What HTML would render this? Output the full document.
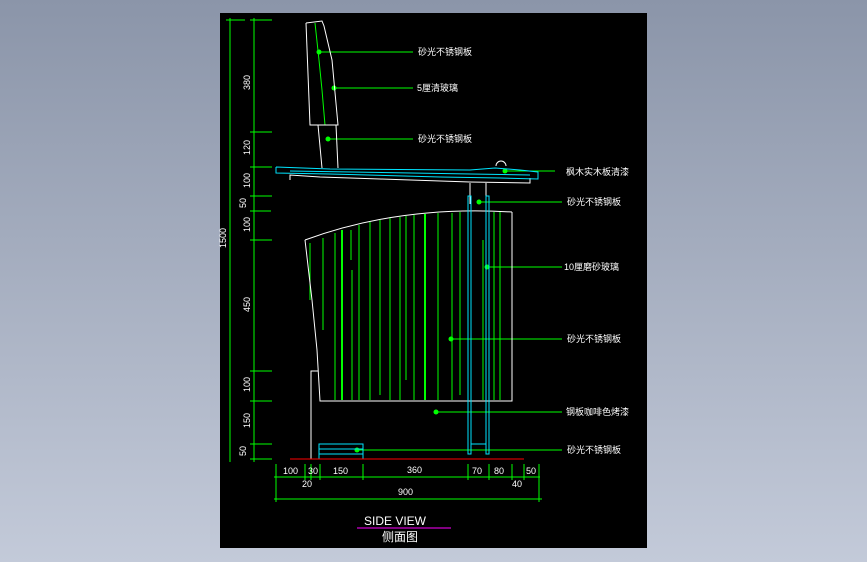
<!DOCTYPE html>
<html><head><meta charset="utf-8"><style>
html,body{margin:0;padding:0;width:867px;height:562px;overflow:hidden;background:linear-gradient(#8b95a9,#c3cad9);}
svg{position:absolute;left:0;top:0}
text{font-family:"Liberation Sans","Noto Sans CJK SC",sans-serif;fill:#fff}
</style></head><body>
<svg width="867" height="562" viewBox="0 0 867 562">
<rect x="220" y="13" width="427" height="535" fill="#000"/>
<g stroke="#00ff00" stroke-width="1" fill="none">
<line x1="230" y1="18" x2="230" y2="462"/>
<line x1="254" y1="18" x2="254" y2="462"/>
<line x1="226" y1="20" x2="245" y2="20"/>
<line x1="250" y1="20" x2="272" y2="20"/>
<line x1="250" y1="132" x2="272" y2="132"/>
<line x1="250" y1="167" x2="272" y2="167"/>
<line x1="250" y1="196" x2="272" y2="196"/>
<line x1="250" y1="211" x2="271" y2="211"/>
<line x1="250" y1="240" x2="272" y2="240"/>
<line x1="250" y1="371" x2="272" y2="371"/>
<line x1="250" y1="401" x2="272" y2="401"/>
<line x1="250" y1="444" x2="272" y2="444"/>
<line x1="250" y1="459" x2="272" y2="459"/>
<!-- bottom dims -->
<line x1="274" y1="477" x2="540" y2="477"/>
<line x1="274" y1="499" x2="542" y2="499"/>
<g>
<line x1="276" y1="464" x2="276" y2="502"/><line x1="305" y1="464" x2="305" y2="480"/>
<line x1="311" y1="464" x2="311" y2="480"/><line x1="320" y1="464" x2="320" y2="480"/>
<line x1="363" y1="464" x2="363" y2="480"/><line x1="468" y1="464" x2="468" y2="480"/>
<line x1="489" y1="464" x2="489" y2="480"/><line x1="512" y1="464" x2="512" y2="480"/>
<line x1="524" y1="464" x2="524" y2="480"/><line x1="539" y1="464" x2="539" y2="502"/>
</g>
<!-- backrest green -->
<polyline points="315,23 319,60 322,90 325,125"/>
<!-- stripes -->
<line x1="310" y1="243" x2="310" y2="300"/>
<line x1="323" y1="238" x2="323" y2="330"/>
<line x1="335" y1="233" x2="335" y2="400"/>
<line x1="342" y1="230" x2="342" y2="400" stroke-width="2"/>
<line x1="351" y1="230" x2="351" y2="260"/>
<line x1="352" y1="270" x2="352" y2="400"/>
<line x1="359" y1="225" x2="359" y2="400"/>
<line x1="370" y1="222" x2="370" y2="400"/>
<line x1="380" y1="220" x2="380" y2="395"/>
<line x1="390" y1="218" x2="390" y2="400"/>
<line x1="400" y1="217" x2="400" y2="400"/>
<line x1="406" y1="216" x2="406" y2="380"/>
<line x1="414" y1="215" x2="414" y2="400"/>
<line x1="425" y1="214" x2="425" y2="400" stroke-width="2"/>
<line x1="438" y1="213" x2="438" y2="400"/>
<line x1="452" y1="213" x2="452" y2="400"/>
<line x1="460" y1="212" x2="460" y2="395"/>
<line x1="483" y1="240" x2="483" y2="400"/>
<line x1="494" y1="212" x2="494" y2="400"/>
<line x1="500" y1="212" x2="500" y2="400"/>
<!-- leaders -->
<line x1="319" y1="52" x2="413" y2="52"/>
<line x1="334" y1="88" x2="413" y2="88"/>
<line x1="328" y1="139" x2="413" y2="139"/>
<line x1="505" y1="171" x2="555" y2="171"/>
<line x1="479" y1="202" x2="562" y2="202"/>
<line x1="487" y1="267" x2="562" y2="267"/>
<line x1="451" y1="339" x2="562" y2="339"/>
<line x1="436" y1="412" x2="562" y2="412"/>
<line x1="357" y1="450" x2="562" y2="450"/>
</g>
<g fill="#00ff00">
<circle cx="319" cy="52" r="2.5"/><circle cx="334" cy="88" r="2.5"/><circle cx="328" cy="139" r="2.5"/>
<circle cx="505" cy="171" r="2.5"/><circle cx="479" cy="202" r="2.5"/><circle cx="487" cy="267" r="2.5"/>
<circle cx="451" cy="339" r="2.5"/><circle cx="436" cy="412" r="2.5"/><circle cx="357" cy="450" r="2.5"/>
</g>
<g stroke="#fff" stroke-width="1" fill="none">
<polyline points="306,23 310,125 318,125 322,168"/>
<polyline points="306,23 322,21 324,26 332,60 338,125 336,125 338,168"/>
<line x1="318" y1="125" x2="336" y2="125"/>
<polyline points="290,180 290,175 320,177 380,179 470,182 530,183 530,178"/>
<polyline points="470,183 470,204"/><polyline points="486,183 486,204"/>
<path d="M305,240 Q400,205 512,212"/>
<polyline points="305,240 312,300 317,350 320,401 512,401 512,212"/>
<polyline points="318,371 311,371 311,459"/>
<path d="M496,166 a5,5 0 0 1 10,0"/>
</g>
<g stroke="#00e5ff" stroke-width="1" fill="none">
<polyline points="276,167 276,173 330,174 440,177 500,178 538,179 538,172 520,170 495,168 470,170 330,169 276,167"/>
<line x1="290" y1="171" x2="530" y2="175"/>
<rect x="468" y="196" width="3" height="258"/>
<rect x="486" y="196" width="3" height="258"/>
<line x1="471" y1="444" x2="486" y2="444"/>
<rect x="319" y="444" width="44" height="15"/>
<line x1="319" y1="449" x2="363" y2="449"/><line x1="319" y1="454" x2="363" y2="454"/>
</g>
<line x1="290" y1="459" x2="524" y2="459" stroke="#ff0000"/>
<line x1="357" y1="528" x2="451" y2="528" stroke="#ff00ff"/>
<g font-size="9">
<text x="418" y="55">砂光不锈钢板</text>
<text x="417" y="91">5厘清玻璃</text>
<text x="418" y="142">砂光不锈钢板</text>
<text x="566" y="175">枫木实木板清漆</text>
<text x="567" y="205">砂光不锈钢板</text>
<text x="564" y="270">10厘磨砂玻璃</text>
<text x="567" y="342">砂光不锈钢板</text>
<text x="566" y="415">钢板咖啡色烤漆</text>
<text x="567" y="453">砂光不锈钢板</text>
</g>
<g font-size="9">
<text x="283" y="474">100</text><text x="308" y="474">30</text><text x="333" y="474">150</text>
<text x="407" y="473">360</text><text x="472" y="474">70</text><text x="494" y="474">80</text>
<text x="526" y="474">50</text><text x="302" y="487">20</text><text x="512" y="487">40</text>
<text x="398" y="495">900</text>
</g>
<g font-size="9">
<text transform="translate(250,90) rotate(-90)">380</text>
<text transform="translate(250,155) rotate(-90)">120</text>
<text transform="translate(250,188) rotate(-90)">100</text>
<text transform="translate(246,208) rotate(-90)">50</text>
<text transform="translate(250,232) rotate(-90)">100</text>
<text transform="translate(250,312) rotate(-90)">450</text>
<text transform="translate(250,392) rotate(-90)">100</text>
<text transform="translate(250,428) rotate(-90)">150</text>
<text transform="translate(246,456) rotate(-90)">50</text>
<text transform="translate(226,248) rotate(-90)">1500</text>
</g>
<text x="364" y="525" font-size="12">SIDE VIEW</text>
<text x="382" y="541" font-size="12">侧面图</text>
</svg>
</body></html>
